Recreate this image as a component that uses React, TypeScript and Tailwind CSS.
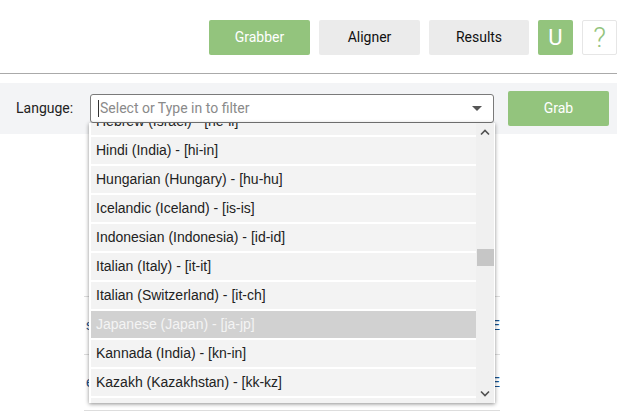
import React from "react";

const items = [
  "Hebrew (Israel) - [he-il]",
  "Hindi (India) - [hi-in]",
  "Hungarian (Hungary) - [hu-hu]",
  "Icelandic (Iceland) - [is-is]",
  "Indonesian (Indonesia) - [id-id]",
  "Italian (Italy) - [it-it]",
  "Italian (Switzerland) - [it-ch]",
  "Japanese (Japan) - [ja-jp]",
  "Kannada (India) - [kn-in]",
  "Kazakh (Kazakhstan) - [kk-kz]",
  "Khmer (Cambodia) - [km-kh]",
];

export default function App() {
  return (
    <div className="w-[617px] bg-white min-h-[416px] font-['Roboto',sans-serif] text-[14px]">
      {/* Header */}
      <div className="h-[74px] border-b border-[#aaaaaa] flex justify-end items-start pt-[20px] gap-[9px]">
        <button className="w-[101px] h-[35px] rounded-[2px] bg-[#93c47d] text-white text-[14px]">Grabber</button>
        <button className="w-[101px] h-[35px] rounded-[2px] bg-[#ebebeb] text-[#111] text-[14px]">Aligner</button>
        <button className="w-[100px] h-[35px] rounded-[2px] bg-[#ebebeb] text-[#111] text-[14px]">Results</button>
        <button className="w-[35px] h-[35px] rounded-[2px] bg-[#93c47d] text-white text-[22px] leading-none">U</button>
        <button className="w-[35px] h-[35px] rounded-[2px] bg-white border border-[#e6e6e6] text-[#93c47d] text-[28px] font-light leading-none">?</button>
      </div>

      {/* Language band */}
      <div className="mt-[9px] h-[51px] bg-[#f3f4f6] flex items-center">
        <div className="w-[90px] pl-[16px] text-[#222]">Languge:</div>
        <div className="relative w-[404px] h-[29px]">
          <div className="w-full h-full border border-[#7a7a7a] rounded-[3px] bg-white flex items-center pl-[7px] pr-[10px]">
            <span className="w-px h-[17px] bg-[#333]"></span>
            <span className="text-[#8a8a8a] text-[14px] ml-px flex-1">Select or Type in to filter</span>
            <span className="w-0 h-0 border-l-[5px] border-r-[5px] border-t-[5px] border-l-transparent border-r-transparent border-t-[#555] mr-[1px]"></span>
          </div>
          {/* Dropdown */}
          <div className="absolute left-[-1px] top-[29px] w-[406px] h-[280px] bg-white z-10 flex shadow-[0_1px_4px_rgba(0,0,0,0.45)] font-['Liberation_Sans',Arial,sans-serif]">
            <div className="flex-1 overflow-hidden pl-[2px]">
              <div className="-mt-[15px]">
                {items.map((it) => (
                  <div
                    key={it}
                    className={
                      it.startsWith("Japanese")
                        ? "h-[27px] mb-[2px] bg-[#d1d1d1] text-[#f4f4f4] flex items-center pl-[5px] text-[14px]"
                        : "h-[27px] mb-[2px] bg-[#f3f3f3] text-[#222] flex items-center pl-[5px] text-[14px]"
                    }
                  >
                    {it}
                  </div>
                ))}
              </div>
            </div>
            <div className="w-[18px] bg-[#f0f0f0] flex flex-col items-center mr-[1px]">
              <svg width="10" height="7" viewBox="0 0 10 7" className="mt-[6px]">
                <path d="M1 5.5 L5 1.5 L9 5.5" stroke="#505050" strokeWidth="1.6" fill="none" />
              </svg>
              <div className="mt-[113px] w-[17px] h-[17px] bg-[#c6c6c6]"></div>
              <div className="flex-1"></div>
              <svg width="10" height="7" viewBox="0 0 10 7" className="mb-[6px]">
                <path d="M1 1.5 L5 5.5 L9 1.5" stroke="#505050" strokeWidth="1.6" fill="none" />
              </svg>
            </div>
          </div>
        </div>
        <button className="ml-[14px] w-[101px] h-[35px] rounded-[2px] bg-[#93c47d] text-white text-[14px]">Grab</button>
      </div>

      {/* Table behind */}
      <div className="ml-[84px] w-[416px] mt-[162px] overflow-hidden font-['Liberation_Sans',Arial,sans-serif] text-[14px] text-[#1a4f8a]">
        <div className="h-[58px] border-t border-[#dddddd] flex items-center pl-[2px]">
          <span className="w-[409px]">s</span>
          <span>E</span>
        </div>
        <div className="h-[57px] border-t border-b border-[#dddddd] flex items-center pl-[2px]">
          <span className="w-[409px]">e</span>
          <span>E</span>
        </div>
      </div>
    </div>
  );
}
